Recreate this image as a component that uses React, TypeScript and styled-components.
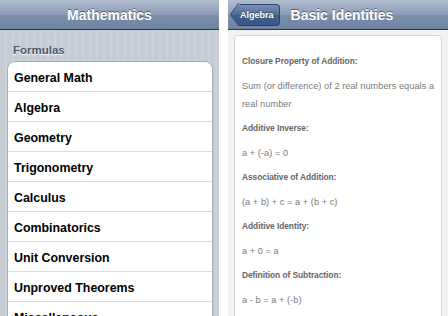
import React from "react";
import styled, { createGlobalStyle } from "styled-components";

const Global = createGlobalStyle`
  html, body { margin: 0; padding: 0; background: #ffffff; }
  body { font-family: "Liberation Sans", Arial, sans-serif; }
  #root { width: 448px; height: 316px; overflow: hidden; }
`;

const Page = styled.div`
  display: flex;
  width: 448px;
  height: 316px;
  background: #ffffff;
  gap: 9px;
`;

const Screen = styled.div<{ $w: number }>`
  width: ${(p) => p.$w}px;
  height: 316px;
  display: flex;
  flex-direction: column;
  overflow: hidden;
  flex-shrink: 0;
`;

const NavBar = styled.div<{ $align?: string }>`
  height: 30px;
  flex-shrink: 0;
  display: flex;
  align-items: center;
  justify-content: ${(p) => p.$align || "center"};
  gap: 11px;
  padding: 0 4px;
  box-sizing: border-box;
  background: linear-gradient(#b3bfcf 0%, #8a9cb5 50%, #7d90ab 51%, #6c83a2 100%);
  border-bottom: 1px solid #2d3642;
`;

const NavTitle = styled.div`
  color: #ffffff;
  font-weight: bold;
  font-size: 14px;
  text-shadow: 0 -1px 0 rgba(0, 0, 0, 0.45);
`;

const BackButton = styled.div`
  position: relative;
  height: 20px;
  margin-left: 6px;
  padding: 0 5px 0 2px;
  display: flex;
  align-items: center;
  color: #ffffff;
  font-weight: bold;
  font-size: 9px;
  text-shadow: 0 -1px 0 rgba(0, 0, 0, 0.4);
  background: linear-gradient(#7a93b8 0%, #4e6b97 50%, #3f5d8b 51%, #3b5785 100%);
  border: 1px solid #2f4466;
  border-left: none;
  border-radius: 0 4px 4px 0;
  &::before {
    content: "";
    position: absolute;
    left: -7px;
    top: 2px;
    width: 14px;
    height: 14px;
    transform: rotate(45deg) skew(8deg, 8deg);
    background: linear-gradient(135deg, #7a93b8 0%, #4e6b97 50%, #3f5d8b 51%, #3b5785 100%);
    border-left: 1px solid #2f4466;
    border-bottom: 1px solid #2f4466;
    border-radius: 0 0 0 3px;
    z-index: 0;
  }
  span { position: relative; z-index: 1; }
`;

const Pinstripe = styled.div`
  flex: 1;
  background: repeating-linear-gradient(90deg, #c5ccd4 0px, #c5ccd4 5px, #cbd2d9 5px, #cbd2d9 7px);
  padding: 0 6px 0 7px;
`;

const SectionHeader = styled.div`
  font-size: 11.5px;
  font-weight: bold;
  color: #4c566c;
  text-shadow: 0 1px 0 #ffffff;
  padding: 14px 0 0 6px;
  height: 31px;
  box-sizing: border-box;
`;

const Group = styled.div`
  background: #ffffff;
  border: 1px solid #a8aeb6;
  border-radius: 8px;
  overflow: hidden;
`;

const Row = styled.div`
  height: 30px;
  box-sizing: border-box;
  display: flex;
  align-items: center;
  padding: 2px 0 0 6px;
  font-size: 12.4px;
  font-weight: bold;
  color: #000000;
  border-bottom: 1px solid #d9d9d9;
`;

const DetailBody = styled.div`
  flex: 1;
  background: #f2f2f2;
  padding: 5px 6px 0 6px;
`;

const Card = styled.div`
  background: #ffffff;
  border: 1px solid #d6d6d6;
  border-radius: 4px;
  height: 400px;
  padding: 16px 2px 0 7px;
  box-sizing: border-box;
`;

const Heading = styled.p`
  margin: 0 0 6.5px 0;
  font-size: 8.4px;
  line-height: 18px;
  font-weight: bold;
  letter-spacing: -0.05px;
  color: #666666;
`;

const Body = styled.p`
  margin: 0 0 6.5px 0;
  font-size: 9.2px;
  line-height: 18px;
  letter-spacing: 0.05px;
  color: #7a7a7a;
`;

const topics = [
  "General Math",
  "Algebra",
  "Geometry",
  "Trigonometry",
  "Calculus",
  "Combinatorics",
  "Unit Conversion",
  "Unproved Theorems",
  "Miscellaneous",
];

const identities: [string, string][] = [
  ["Closure Property of Addition:", "Sum (or difference) of 2 real numbers equals a real number"],
  ["Additive Inverse:", "a + (-a) = 0"],
  ["Associative of Addition:", "(a + b) + c = a + (b + c)"],
  ["Additive Identity:", "a + 0 = a"],
  ["Definition of Subtraction:", "a - b = a + (-b)"],
];

export default function App() {
  return (
    <>
      <Global />
      <Page>
        <Screen $w={219}>
          <NavBar>
            <NavTitle>Mathematics</NavTitle>
          </NavBar>
          <Pinstripe>
            <SectionHeader>Formulas</SectionHeader>
            <Group>
              {topics.map((t) => (
                <Row key={t}>{t}</Row>
              ))}
            </Group>
          </Pinstripe>
        </Screen>
        <Screen $w={220}>
          <NavBar $align="flex-start">
            <BackButton>
              <span>Algebra</span>
            </BackButton>
            <NavTitle>Basic Identities</NavTitle>
          </NavBar>
          <DetailBody>
            <Card>
              {identities.map(([h, b]) => (
                <React.Fragment key={h}>
                  <Heading>{h}</Heading>
                  <Body>{b}</Body>
                </React.Fragment>
              ))}
            </Card>
          </DetailBody>
        </Screen>
      </Page>
    </>
  );
}
